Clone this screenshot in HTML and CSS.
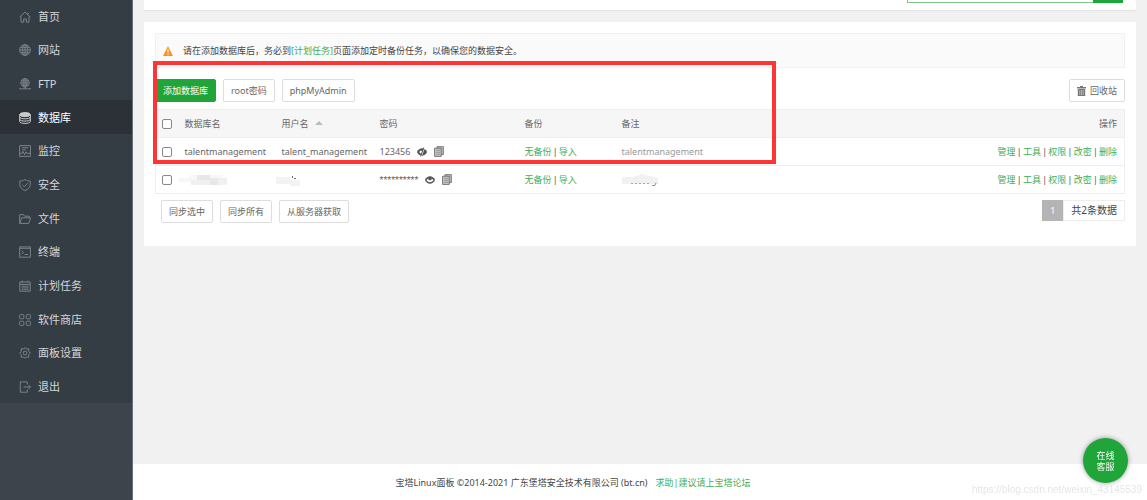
FILE: index.html
```html
<!DOCTYPE html>
<html lang="zh-CN">
<head>
<meta charset="utf-8">
<title>宝塔Linux面板</title>
<link rel="stylesheet" href="styles.css">
</head>
<body>
<div class="app">
  <nav class="sidebar">
    <div class="menu">
      <a class="item" href="#"><svg class="ico" viewBox="0 0 12 12"><path d="M.6 6.3 6 1l5.4 5.3M2 5.5v5.7h2.7V8h2.6v3.2H10V5.5M9 3.5V1.6"/></svg>首页</a>
      <a class="item" href="#"><svg class="ico" viewBox="0 0 12 12"><circle cx="6" cy="6" r="5.3"/><ellipse cx="6" cy="6" rx="2.4" ry="5.3"/><path d="M.7 6h10.6M6 .7v10.6M1.5 3.3h9M1.5 8.7h9"/></svg>网站</a>
      <a class="item" href="#"><svg class="ico" viewBox="0 0 12 12"><circle cx="6" cy="4.8" r="4.2"/><ellipse cx="6" cy="4.8" rx="1.9" ry="4.2"/><path d="M1.8 4.8h8.4M6 .6v10M2.5 2.8h7M2.5 7h7M0 10.8h12"/></svg>FTP</a>
      <a class="item active" href="#"><svg class="ico" viewBox="0 0 12 12"><ellipse class="solid" cx="6" cy="2.6" rx="5.3" ry="2"/><path d="M.7 2.6v7c0 2.4 10.6 2.4 10.6 0v-7M.7 5c0 2.4 10.6 2.4 10.6 0M.7 7.3c0 2.4 10.6 2.4 10.6 0"/></svg>数据库</a>
      <a class="item" href="#"><svg class="ico" viewBox="0 0 12 12"><path d="M.6.6h10.8v10.8H.6zM3 2.7h6M3 4.8h4M1 8.3h2l1-2 1.6 3.5 1.5-3 .8 1.5H11"/></svg>监控</a>
      <a class="item" href="#"><svg class="ico" viewBox="0 0 12 12"><path d="M6 .5c1.6 1.1 3.3 1.5 5.2 1.6v3.6c0 2.7-2.2 4.7-5.2 5.8C3 10.4.8 8.4.8 5.7V2.1C2.7 2 4.4 1.6 6 .5ZM3.3 5.8l2 2 3.6-3.7"/></svg>安全</a>
      <a class="item" href="#"><svg class="ico" viewBox="0 0 12 12"><path d="M.7 10.4V1.6h3.7l1.2 1.6h4.6v1.6M.7 10.4l2-5.6h8.9l-1.8 5.6z"/></svg>文件</a>
      <a class="item" href="#"><svg class="ico" viewBox="0 0 12 12"><path d="M.6.9h10.8v10.3H.6zM.6 2.3h10.8M2.6 4.8 4.5 6.5 2.6 8.2M5.5 8.5h3.5"/></svg>终端</a>
      <a class="item" href="#"><svg class="ico" viewBox="0 0 12 12"><path d="M.8 2h10.4v9.2H.8zM.8 4.4h10.4M3.3.6v2.2M8.7.6v2.2"/><path stroke-width=".6" d="M2.400 6.200h7.400M2.400 7.800h7.400M2.400 9.400h7.400M3.800 5.400v5M6 5.400v5M8.200 5.400v5"/></svg>计划任务</a>
      <a class="item" href="#"><svg class="ico" viewBox="0 0 12 12"><rect x=".6" y=".6" width="4.2" height="4.2" rx="1"/><rect x="7.2" y=".6" width="4.2" height="4.2" rx="1"/><rect x=".6" y="7.2" width="4.2" height="4.2" rx="1"/><rect x="7.2" y="7.2" width="4.2" height="4.2" rx="1"/></svg>软件商店</a>
      <a class="item" href="#"><svg class="ico" viewBox="0 0 12 12"><path d="M6 .6 7.300 2l2.500-.2-.1 2.500L11.400 6 9.700 7.700l.1 2.500-2.500-.2L6 11.400 4.700 10l-2.500.2.1-2.500L.6 6l1.700-1.700-.1-2.500 2.500.2z"/><circle cx="6" cy="6" r="1.900"/></svg>面板设置</a>
      <a class="item" href="#"><svg class="ico" viewBox="0 0 12 12"><path d="M8.300 3.500V.9H1.300v10.300h7V8.500M4.500 6h7M9.400 3.900 11.500 6 9.400 8.100"/></svg>退出</a>
    </div>
  </nav>
  <div class="content">
    <header class="topbar">
      <form class="search"><input type="text" aria-label="搜索"><button type="button" aria-label="搜索"></button></form>
    </header>
    <main class="card">
      <p class="notice"><svg class="warn" viewBox="0 0 10 10"><path fill="#f7941d" d="M5 0 10 10H0z"/><path stroke="#fff" stroke-width="1.200" d="M5 3.500v3M5 7.500v1.200"/></svg><span>请在添加数据库后，务必到<a href="#">[计划任务]</a>页面添加定时备份任务，以确保您的数据安全。</span></p>
      <div class="toolbar">
        <button class="btn primary" type="button">添加数据库</button>
        <button class="btn" type="button">root密码</button>
        <button class="btn" type="button">phpMyAdmin</button>
        <button class="btn recycle" type="button"><svg class="trash" viewBox="0 0 9 10"><path fill="#777" d="M3 0h3v1h3v1.500H0V1h3zM.8 3h7.400v7H.8z"/><path stroke="#ddd" stroke-width=".6" d="M2.800 4v5M4.500 4v5M6.200 4v5"/></svg>回收站</button>
      </div>
      <table class="list">
        <colgroup><col class="c-check"><col class="c-name"><col class="c-user"><col class="c-pwd"><col class="c-backup"><col><col class="c-ops"></colgroup>
        <thead>
          <tr><th><input type="checkbox" aria-label="全选"></th><th>数据库名</th><th>用户名 <span class="sort"></span></th><th>密码</th><th>备份</th><th>备注</th><th class="ops">操作</th></tr>
        </thead>
        <tbody>
          <tr>
            <td><input type="checkbox" aria-label="talentmanagement"></td><td>talentmanagement</td><td>talent_management</td>
            <td><div class="pwd"><span>123456</span><svg class="eye" viewBox="0 0 10 10"><path fill="#555" d="M0 5c2-5 8-5 10 0-2 5-8 5-10 0z"/><circle cx="4" cy="5" r="1.500" fill="#fff"/><path stroke="#fff" stroke-width=".8" d="M7.500 1 4.500 9"/><path stroke="#555" stroke-width=".9" d="M6.700.5 3.700 9.500"/></svg><svg class="copy" viewBox="0 0 10 11"><path fill="#bbb" stroke="#777" stroke-width=".9" d="M3 .6h6.400v8H3z"/><path fill="#ccc" stroke="#666" stroke-width=".9" d="M.6 2.200h6.600v8.200H.6z"/><path stroke="#777" stroke-width=".7" d="M2 4.300h4M2 6.300h4M2 8.300h4"/></svg></div></td>
            <td class="links"><a href="#">无备份</a> | <a href="#">导入</a></td><td class="note">talentmanagement</td>
            <td class="ops links"><a href="#">管理</a> | <a href="#">工具</a> | <a href="#">权限</a> | <a href="#">改密</a> | <a href="#">删除</a></td>
          </tr>
          <tr>
            <td><input type="checkbox" aria-label="数据库 2"></td>
            <td><svg class="mask wide" viewBox="0 0 54 12"><path fill="#f7f7f7" d="M0 4h10V1h34v3h4v7H12V8H0z"/><path fill="#e8e8e8" d="M18 1h13v5H18zM31 4h8v7h-8z"/><path fill="#f0f0f0" d="M12 6h19v5H12zM39 4h9v7h-9z"/></svg></td>
            <td><svg class="mask wide" viewBox="0 0 54 12"><path fill="#f3f3f3" d="M0 3h14v3h10v6H14v-2H0z"/><path stroke="#777" d="M16.500 2v2M18 4.500h2"/></svg></td>
            <td><div class="pwd"><span class="stars">**********</span><svg class="eye" viewBox="0 0 10 10"><path fill="#555" d="M0 5c2-5 8-5 10 0-2 5-8 5-10 0z"/><path fill="#fff" d="M1.500 5.200c.5-1 1.200-1.500 2-1.800-.8 2.500 3.800 2.500 3 0 .8.300 1.500.8 2 1.800C6.500 7.800 3.500 7.800 1.500 5.200z"/></svg><svg class="copy" viewBox="0 0 10 11"><path fill="#bbb" stroke="#777" stroke-width=".9" d="M3 .6h6.400v8H3z"/><path fill="#ccc" stroke="#666" stroke-width=".9" d="M.6 2.200h6.600v8.200H.6z"/><path stroke="#777" stroke-width=".7" d="M2 4.300h4M2 6.300h4M2 8.300h4"/></svg></div></td>
            <td class="links"><a href="#">无备份</a> | <a href="#">导入</a></td>
            <td><svg class="mask" viewBox="0 0 54 12"><path fill="#f1f1f1" d="M0 3h10l10-3 16 4v6H0z"/><path stroke="#aaa" stroke-dasharray="2 2" d="M9 9.500h20"/><path fill="none" stroke="#999" d="M30 11.500h3l1-3"/></svg></td>
            <td class="ops links"><a href="#">管理</a> | <a href="#">工具</a> | <a href="#">权限</a> | <a href="#">改密</a> | <a href="#">删除</a></td>
          </tr>
        </tbody>
      </table>
      <div class="bottom">
        <button class="btn" type="button">同步选中</button>
        <button class="btn" type="button">同步所有</button>
        <button class="btn" type="button">从服务器获取</button>
        <div class="pager"><span class="page">1</span><span class="total">共2条数据</span></div>
      </div>
      <div class="highlight"></div>
    </main>
    <footer class="footer"><span>宝塔Linux面板 ©2014-2021 广东堡塔安全技术有限公司 (bt.cn)</span><a href="#">求助|建议请上宝塔论坛</a></footer>
  </div>
</div>
<button class="service" type="button">在线<br>客服</button>
<span class="watermark">https://blog.csdn.net/weixin_43145539</span>
</body>
</html>
```
FILE: styles.css
```css
* { box-sizing: border-box; }
body {
  margin: 0;
  background: #f1f1f1;
  color: #666;
  font: 9px/14px "Noto Sans", "Noto Sans CJK SC", sans-serif;
}
a { color: #3fae55; text-decoration: none; }
button, input { font: inherit; margin: 0; }
svg { flex: none; }
.app { display: flex; min-height: 100vh; overflow: hidden; }
.sidebar {
  flex: none;
  width: 133px;
  background: #3d444c;
  border-right: 1px solid #65707a;
}
.menu {
  display: grid;
  grid-template-rows: repeat(12, 1fr);
  height: 404px;
  margin-top: -1px;
  background: #353d44;
}
.item {
  display: flex;
  align-items: center;
  gap: 7px;
  padding: 2px 0 0 19px;
  color: #d4d6d8;
  font-size: 11px;
}
.item.active { background: #2c3138; color: #fff; }
.ico { width: 12px; height: 12px; fill: none; stroke: #7c8186; stroke-width: 1; }
.active .ico { stroke: #c8cacc; }
.solid { fill: #c8cacc; }

.content { flex: 1; min-width: 0; display: flex; flex-direction: column; }
.topbar {
  height: 10px;
  margin: 0 11px;
  padding-right: 13px;
  display: flex;
  justify-content: flex-end;
  align-items: flex-end;
  background: #fff;
  box-shadow: 0 1px 1px #e4e4e4;
}
.search { display: flex; margin-bottom: 7px; height: 24px; }
.search input { width: 186px; border: 1px solid #7cc98a; border-right: 0; padding: 0 6px; background: #fff; }
.search button { width: 30px; border: 0; background: #20a53a; }

.card {
  position: relative;
  margin: 12px 11px 0;
  padding: 11px 11px 23px;
  background: #fff;
}
.notice {
  display: flex;
  align-items: center;
  gap: 10px;
  height: 35px;
  margin: 0;
  padding-left: 7px;
  border: 1px solid #f1f1f1;
  background: #fafafa;
  color: #444;
}
.warn { width: 10px; height: 10px; }
.toolbar { display: flex; gap: 7px; margin: 11px 0 7px; }
.btn {
  height: 23px;
  padding: 0 7px;
  border: 1px solid #ddd;
  border-radius: 2px;
  background: #fff;
  color: #666;
}
.btn.primary { border-color: #20a53a; background: #20a53a; color: #fff; }
.recycle { display: flex; align-items: center; gap: 4px; margin-left: auto; }
.trash { width: 9px; height: 10px; }

.list { width: 100%; table-layout: fixed; border-collapse: collapse; border: 1px solid #eee; }
.list th, .list td { height: 28px; padding: 0; text-align: left; font-weight: 400; white-space: nowrap; border-bottom: 1px solid #eee; }
.list th { background: #f6f6f6; }
.list input {
  display: block;
  appearance: none;
  width: 10px;
  height: 10px;
  margin-left: 6px;
  border: 1px solid #888;
  border-radius: 2px;
  background: #fff;
}
.list .ops { text-align: right; padding-right: 7px; }
.list .links { font-family: "Liberation Sans", "Noto Sans CJK SC", sans-serif; }
.list .note { color: #999; }
.c-check { width: 29px; }
.c-name { width: 97px; }
.c-user { width: 98px; }
.c-pwd { width: 145px; }
.c-backup { width: 97px; }
.c-ops { width: 180px; }
.sort {
  display: inline-block;
  margin: 0 0 2px 4px;
  border: 4px solid transparent;
  border-top: 0;
  border-bottom-color: #bbb;
}
.pwd { display: flex; align-items: center; gap: 7px; }
.stars { font-family: Roboto, sans-serif; }
.eye { width: 10px; height: 10px; }
.copy { width: 10px; height: 11px; }
.mask { display: block; width: 54px; height: 12px; }
.mask.wide { margin-left: -6px; }

.bottom { display: flex; align-items: flex-start; gap: 7px; margin-top: 6px; padding-left: 6px; }
.pager { display: flex; margin-left: auto; height: 21px; line-height: 19px; }
.page { width: 21px; border: 1px solid #b4b4b4; background: #b4b4b4; color: #fff; text-align: center; }
.total { padding: 0 7px; border: 1px solid #eee; color: #444; font-size: 10px; }
.highlight {
  position: absolute;
  left: 9px;
  top: 39px;
  width: 623px;
  height: 103px;
  border: 4px solid #ff3535;
  pointer-events: none;
}
.footer {
  display: flex;
  justify-content: center;
  align-items: center;
  gap: 8px;
  height: 36px;
  margin-top: auto;
  padding: 2px 134px 0 0;
  background: #fff;
  color: #444;
}
.service {
  position: fixed;
  right: 19px;
  bottom: 17px;
  width: 45px;
  height: 45px;
  padding: 0;
  border: 0;
  border-radius: 50%;
  background: #20a53a;
  color: #fff;
  line-height: 11px;
  box-shadow: 0 0 5px rgba(0, 0, 0, .4);
}
.watermark {
  position: fixed;
  right: 5px;
  bottom: 3px;
  color: #e6e6e6;
  font-family: "Liberation Sans", Arial, sans-serif;
  font-size: 10px;
}
```
